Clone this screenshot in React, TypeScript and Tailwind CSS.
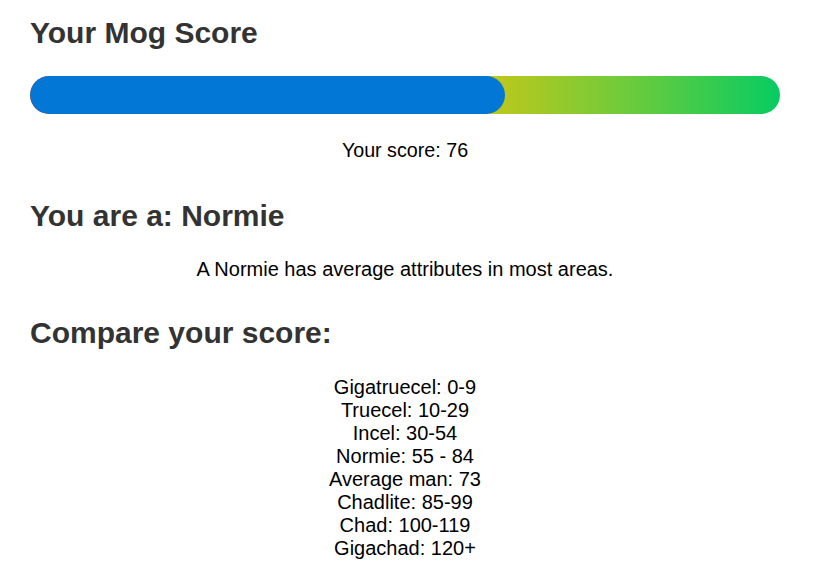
import React from "react";

const score = 76;
const maxScore = 120;

const tiers = [
  "Gigatruecel: 0-9",
  "Truecel: 10-29",
  "Incel: 30-54",
  "Normie: 55 - 84",
  "Average man: 73",
  "Chadlite: 85-99",
  "Chad: 100-119",
  "Gigachad: 120+",
];

export default function App() {
  const pct = Math.min(100, (score / maxScore) * 100);
  return (
    <div
      className="min-h-[576px] bg-white px-[30px] pt-[15px] text-black"
      style={{ fontFamily: '"Liberation Sans", Arial, sans-serif' }}
    >
      <div className="w-[750px]">
        <h1 className="text-[30px] leading-[36px] font-bold text-[#333333]">Your Mog Score</h1>

        <div className="mt-[25px] h-[38px] w-full overflow-hidden rounded-full bg-[linear-gradient(to_right,#e2461c_0%,#d9a018_35%,#bcc81c_62%,#6ccb3c_80%,#06cc62_100%)]">
          <div className="h-full rounded-full bg-[#0277d6]" style={{ width: `${pct}%` }} />
        </div>

        <p className="mt-[25px] text-center text-[19.7px] leading-[23px]">Your score: {score}</p>

        <h2 className="mt-[36px] text-[30px] leading-[36px] font-bold text-[#333333]">You are a: Normie</h2>

        <p className="mt-[24px] text-center text-[20px] leading-[23px]">
          A Normie has average attributes in most areas.
        </p>

        <h2 className="mt-[34px] text-[30px] leading-[36px] font-bold text-[#333333]">Compare your score:</h2>

        <ul className="mt-[25px] text-center text-[20px] leading-[23px]">
          {tiers.map((t) => (
            <li key={t}>{t}</li>
          ))}
        </ul>
      </div>
    </div>
  );
}
